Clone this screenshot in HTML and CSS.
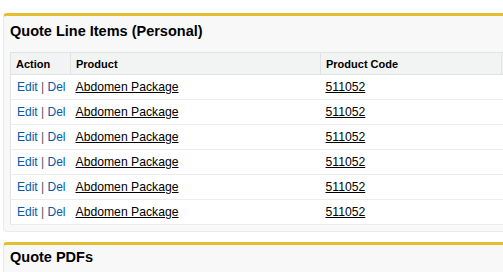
FILE: index.html
```html
<!DOCTYPE html>
<html lang="en">
<head>
    <meta charset="UTF-8">
    <title>Quote Line Items</title>
    <link rel="stylesheet" href="styles.css">
</head>
<body>
<div class="page">
    <div class="block">
        <div class="block-head"><h3>Quote Line Items (Personal)</h3></div>
        <table class="list">
            <tr class="head-row">
                <th class="col-action">Action</th>
                <th class="col-product">Product</th>
                <th class="col-code">Product Code</th>
                <th class="col-more"></th>
            </tr>
            <tr>
                <td class="action"><a href="#">Edit</a> | <a href="#">Del</a></td>
                <td><a class="data-link" href="#">Abdomen Package</a></td>
                <td><a class="data-link" href="#">511052</a></td>
                <td></td>
            </tr>
            <tr>
                <td class="action"><a href="#">Edit</a> | <a href="#">Del</a></td>
                <td><a class="data-link" href="#">Abdomen Package</a></td>
                <td><a class="data-link" href="#">511052</a></td>
                <td></td>
            </tr>
            <tr>
                <td class="action"><a href="#">Edit</a> | <a href="#">Del</a></td>
                <td><a class="data-link" href="#">Abdomen Package</a></td>
                <td><a class="data-link" href="#">511052</a></td>
                <td></td>
            </tr>
            <tr>
                <td class="action"><a href="#">Edit</a> | <a href="#">Del</a></td>
                <td><a class="data-link" href="#">Abdomen Package</a></td>
                <td><a class="data-link" href="#">511052</a></td>
                <td></td>
            </tr>
            <tr>
                <td class="action"><a href="#">Edit</a> | <a href="#">Del</a></td>
                <td><a class="data-link" href="#">Abdomen Package</a></td>
                <td><a class="data-link" href="#">511052</a></td>
                <td></td>
            </tr>
            <tr>
                <td class="action"><a href="#">Edit</a> | <a href="#">Del</a></td>
                <td><a class="data-link" href="#">Abdomen Package</a></td>
                <td><a class="data-link" href="#">511052</a></td>
                <td></td>
            </tr>
        </table>
    </div>
    <div class="block block-pdf">
        <div class="block-head"><h3>Quote PDFs</h3></div>
    </div>
</div>
</body>
</html>
```

FILE: styles.css
```css
* {
    margin: 0;
    padding: 0;
    box-sizing: border-box;
}
html, body {
    height: 272px;
    overflow: hidden;
}
body {
    background: #fff;
    font-family: "Liberation Sans", Arial, sans-serif;
    font-size: 12px;
    color: #000;
}
.page {
    padding: 13px 0 0 3px;
    width: 503px;
    height: 272px;
    overflow: hidden;
}
.block {
    background: #f8f8f8;
    border: 1px solid #eaeaea;
    border-top: 3px solid #e5be2f;
    border-right: 0;
    border-radius: 4px 0 0 4px;
    padding: 0 0 6px 6px;
    margin-bottom: 10px;
    height: 219px;
    overflow: hidden;
}
.block-pdf {
    height: 40px;
    border-bottom: 0;
}
.block-head {
    padding: 6px 0 12px 0;
}
.block-pdf .block-head {
    padding-top: 3px;
}
.block-head h3 {
    font-size: 14.5px;
    line-height: 18px;
    font-weight: bold;
    color: #000;
}
.list {
    border-collapse: collapse;
    background: #fff;
    border: 1px solid #e0e3e5;
    border-right: 0;
    width: 494px;
    table-layout: fixed;
}
.list th {
    background: #f2f3f3;
    border: 1px solid #e0e3e5;
    text-align: left;
    font-size: 11px;
    font-weight: bold;
    line-height: 13px;
    padding: 4px 5px 3px 5px;
    height: 22px;
    white-space: nowrap;
}
.col-action {
    width: 60px;
}
.col-product {
    width: 250px;
}
.col-code {
    width: 181px;
}
.col-more {
    width: 3px;
}
.list th.col-more {
    padding: 0;
    border-right: 0;
}
.list td {
    border-bottom: 1px solid #ececec;
    height: 25px;
    padding: 0 5px;
    line-height: 14px;
    color: #555;
    white-space: nowrap;
}
.list td.action {
    padding-left: 6px;
}
.action a {
    color: #015ba7;
    text-decoration: none;
}
.data-link {
    color: #000;
    font-size: 12.2px;
    text-decoration: underline;
}
```
